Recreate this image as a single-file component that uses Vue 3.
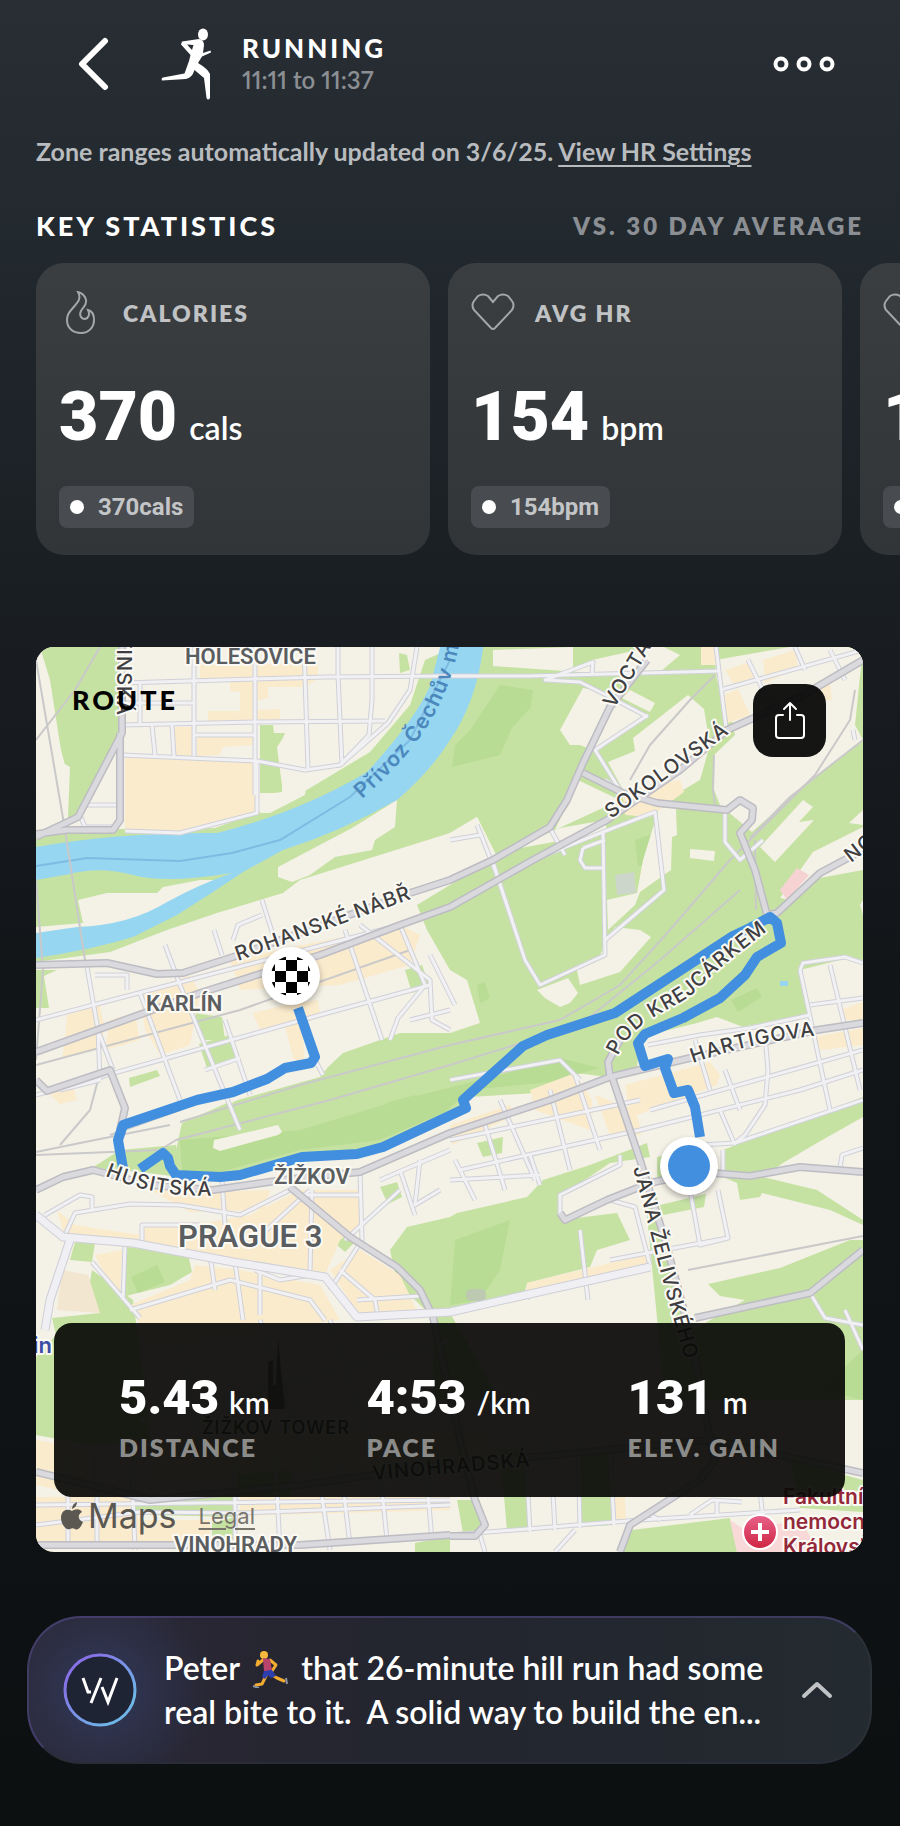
<script setup>
import { ref } from 'vue'

const stats = ref([
  { label: 'CALORIES', icon: 'flame', value: '370', unit: 'cals', average: '370cals' },
  { label: 'AVG HR', icon: 'heart', value: '154', unit: 'bpm', average: '154bpm' },
  { label: 'MAX HR', icon: 'heart', value: '178', unit: 'bpm', average: '178bpm' },
])

const summary = ref([
  { label: 'DISTANCE', value: '5.43', unit: 'km' },
  { label: 'PACE', value: '4:53', unit: '/km' },
  { label: 'ELEV. GAIN', value: '131', unit: 'm' },
])

// map shapes, all in the same space as the svg viewBox
const parks = [
  '40,647 122,647 122,733 78,817 68,817 70,767 63,763 50,680',
  '36,835 120,829 215,828 290,800 370,752 410,705 425,660 470,640 490,640 478,700 430,780 350,840 240,880 200,880 163,887 157,893 125,893 107,893 78,900 83,923 36,927',
  '260,725 273,725 274,733 285,733 283,738 277,747 283,793 260,793',
  '399,653 407,655 410,670 400,673',
  '478,647 863,647 863,960 848,958 800,970 810,1013 743,1027 717,1017 697,1023 640,1037 637,1068 607,1077 577,1073 550,1092 470,1097 450,1120 367,1155 300,1157 233,1178 180,1177 176,1150 182,1123 227,1103 320,1077 328,1067 343,1053 400,1033 450,1033 480,1023 467,980 450,970 427,930 417,905 450,885 497,857 477,817 450,833 300,880 283,893 217,913 167,930 110,952 36,962 36,955 110,940 180,912 233,878 350,830 430,775 465,710',
  '92,1168 120,1150 176,1145 180,1177 140,1172',
  '194,1013 222,1017 225,1040 202,1040',
  '199,1044 230,1035 235,1058 207,1068',
  '129,1078 157,1070 160,1076 130,1087',
  '405,970 422,965 430,987 412,993',
  '36,970 57,970 44,976 49,1008 36,1008',
  '450,1217 457,1213 527,1197 543,1180 590,1165 647,1143 650,1157 610,1163 560,1197 560,1220 617,1213 630,1240 597,1250 590,1267 527,1283 523,1300 450,1313 500,1400 433,1400 433,1317 397,1283 390,1250 407,1227',
  '723,1150 783,1127 863,1097 863,1117 817,1143 783,1163 763,1177 817,1190 863,1220 863,1225 830,1210 762,1193 760,1197 740,1200 737,1183 723,1177',
  '477,1143 503,1137 502,1153 483,1157',
  '657,1157 690,1150 690,1180 657,1180',
  '660,1205 706,1194 704,1207 663,1215',
  '645,1195 657,1197 687,1330 800,1300 863,1270 863,1400 665,1400',
  '708,1284 780,1268 850,1240 863,1240 863,1290 790,1320 700,1326 745,1300 720,1296',
  '36,1357 56,1335 52,1318 100,1313 88,1293 92,1270 133,1300 145,1390 150,1440 90,1445 36,1435',
  '75,1242 95,1243 92,1262 70,1260',
  '127,1247 188,1254 192,1272 170,1285 122,1297',
  '380,1187 397,1182 402,1197 388,1204',
  '331,1240 342,1230 354,1243 345,1252',
  '230,1450 295,1445 290,1497 235,1497',
  '135,1497 235,1497 235,1517 150,1515 135,1510',
  '212,1523 235,1517 235,1540 212,1537',
  '457,1500 480,1500 483,1533 463,1533',
  '500,1450 525,1450 530,1530 507,1531',
  '580,1450 610,1450 613,1525 582,1527',
  '632,1530 730,1518 737,1552 620,1552',
  '415,1543 450,1536 450,1552 415,1552',
  '790,1460 863,1480 863,1512 800,1508',
]
const deepParks = [
  '470,730 500,685 533,690 531,707 512,728 500,755 452,767 455,745',
  '300,1130 400,1100 500,1075 560,1058 600,1068 550,1082 470,1090 445,1112 380,1140 300,1150 220,1172 182,1172 180,1140',
  '635,840 658,832 661,862 638,866',
  '386,1103 415,1095 420,1108 388,1120',
  '731,1000 757,988 762,997 738,1012',
  '131,1277 157,1265 165,1282 138,1293',
  '477,985 485,982 490,998 480,1003',
  '455,1240 510,1220 500,1270 480,1300 450,1305',
  '863,1350 820,1390 863,1400',
]
const land = [
  '36,650 42,665 48,700 65,765 68,817 60,825 36,815',
  '375,685 398,689 390,705 388,716 374,716',
  '283,770 308,770 305,795 270,813 260,813 260,795 282,792',
  '278,867 352,828 397,800 395,827 375,840 372,850 335,857 310,875 292,882 278,877',
  '493,650 573,647 573,668 592,662 592,673 493,666',
  '592,660 660,645 680,655 660,672 592,673',
  '583,688 606,692 642,716 597,752 580,745 570,745 560,730',
  '630,690 655,703 650,712 622,698',
  '633,738 688,695 704,709 710,745 700,780 680,792 640,800 623,790 608,762 635,751',
  '578,780 605,793 620,800 555,830',
  '560,828 605,820 607,832 510,850',
  '450,833 477,817 497,857 450,875',
  '714,755 735,735 733,724 717,680 715,660 790,647 863,647 855,725 863,740 800,790 752,832 720,805 714,790',
  '690,849 715,851 714,861 690,858',
  '659,808 676,808 677,835 672,837 671,870 640,892 635,905 608,930 607,900 637,893 643,860',
  '615,927 640,930 651,937 620,972 580,985 577,970 600,955',
  '537,990 568,978 578,993 570,1003 560,1007 545,998',
  '760,847 803,800 813,807 799,822 814,820 775,862',
  '780,898 813,852 863,827 863,870 820,878 790,900',
  '860,905 863,900 863,915',
  '849,823 863,810 863,825',
  '214,1140 278,1125 282,1132 278,1135 220,1151 213,1148',
  '225,1097 265,1085 230,1104',
]
const built = [
  '200,664 318,664 318,678 305,687 268,687 268,698 253,702 253,710 280,709 280,721 208,721 208,711 240,711 240,692 230,691 230,680 200,680',
  '125,758 257,758 257,813 180,832 125,830',
  '175,727 193,727 193,756 175,756',
  '197,737 255,737 255,745 223,747 220,755 197,756',
  '701,647 716,647 716,665 701,665',
  '725,670 750,662 758,675 735,686',
  '763,660 795,650 798,668 765,683',
  '724,695 738,689 750,715 728,723',
  '622,790 680,780 684,792 650,817 625,815',
  '820,683 830,683 832,700 815,700',
  '67,1015 100,1005 105,1030 97,1050 62,1058 65,1040',
  '140,995 190,975 200,993 190,1045 160,1055 145,1030',
  '230,960 400,925 420,935 410,965 340,985 240,990',
  '253,1013 285,1005 318,1000 320,1015 302,1025 305,1065 293,1058 285,1025 260,1030',
  '50,1095 73,1085 77,1100 60,1104',
  '110,1020 135,1013 140,1040 105,1050',
  '57,1210 75,1225 140,1235 135,1245 65,1238',
  '140,1225 210,1222 250,1215 300,1190 360,1190 360,1225 340,1240 325,1275 235,1260 140,1243',
  '150,1190 210,1192 270,1190 265,1210 190,1212',
  '95,1255 122,1250 120,1293 105,1275',
  '195,1265 240,1270 320,1285 340,1320 150,1345 130,1305 190,1280',
  '330,1270 360,1250 400,1275 420,1317 360,1317',
  '450,1125 510,1105 515,1115 452,1145',
  '530,1090 575,1073 592,1100 590,1130 535,1110',
  '595,1095 635,1110 640,1135 610,1135',
  '625,1085 710,1062 720,1075 717,1085 637,1115 642,1135 632,1130',
  '815,1037 863,1028 863,1045 820,1050',
  '840,1010 863,1002 863,1020 845,1020',
  '527,1283 648,1254 650,1264 527,1293',
  '36,1440 90,1450 90,1497 36,1485',
  '36,1497 450,1497 450,1510 240,1516 240,1497 135,1497 135,1513 140,1520 210,1520 210,1545 36,1545',
  '613,1497 625,1497 626,1520 614,1522',
  '150,1440 480,1430 500,1460 300,1470 150,1480',
]
const minorRoads = [
  'M122,683 325,677 450,676 530,676 720,671',
  'M122,725 255,722 385,721',
  'M194,647V756M255,647V795M304,647 308,768M338,647V675L342,765M372,647V700L369,735 340,765',
  'M122,755 257,761 305,770 340,765 388,723 410,690 417,647',
  'M152,725 155,755M172,725 174,756M140,683V723M195,703H122M195,735H255',
  'M257,761V813L180,833 125,831M82,805 120,805M80,815 85,827 115,827',
  'M262,900 273,935M233,940 238,925 262,915M214,930 222,955M165,945 180,985 240,1130',
  'M477,825 495,870 525,960M450,840 480,835M493,862 525,960 540,985 605,955 603,832 533,860',
  'M603,832 655,812 664,890 605,940M583,848 580,860 585,868 605,868M583,848 605,840',
  'M648,715 595,750 620,790 605,780M592,673 593,662 545,680 580,682 610,697 648,717',
  'M716,647 727,735M720,690 863,650M748,660 758,680 770,705M795,647 805,670M830,650 845,680',
  'M551,830 565,855M725,811 725,842 740,860 763,840M853,730 855,740',
  'M36,1020 150,990 400,925M36,1095 320,1015 430,985M60,1090 100,1080',
  'M87,967 98,1030 113,1070M98,1030 100,1080M95,975 127,975 127,990',
  'M140,993 180,1100M225,1020 250,1095M315,1060 323,1075M345,930 382,1040M360,925 430,980 432,1020 450,1030',
  'M400,925 425,985 398,1018 390,1040M410,1020 450,1010M430,955 455,1005M205,1070 240,1058',
  'M45,1215 80,1195 92,1197V1210M65,1235 75,1213 130,1204 180,1205 240,1215 290,1190M142,1243V1225L200,1225',
  'M250,1245 310,1190M312,1190 310,1270M360,1172 362,1240 330,1290M362,1195H300M222,1180 225,1225',
  'M125,1245 123,1300M210,1255 215,1290M235,1262 243,1320M260,1270 260,1315M92,1262 140,1318',
  'M130,1310 230,1280 310,1300 325,1320M255,1270 280,1280 310,1275M340,1270 375,1300 378,1317M357,1300 420,1296',
  'M380,1180 450,1150M400,1170 415,1215M420,1160 415,1205 440,1190M345,1240 400,1190',
  'M500,1100 535,1180M550,1090 570,1170M575,1075 600,1150M450,1140 640,1100M460,1170 640,1130 800,1090 863,1070',
  'M450,1080 560,1060 580,1080M455,1160 475,1200M485,1125 505,1190M450,1180 540,1175M530,1155 540,1185',
  'M648,1045 700,1035 750,1028 810,1015M695,1040 710,1090M725,1070 740,1110M765,1035 768,1070 765,1105 745,1135 735,1143',
  'M800,970 830,1110M830,965 860,1090M810,1005 863,998M650,1110 863,1050M700,1145 735,1143 863,1100M723,1150V1172',
  'M800,970 803,963 845,957 863,963M720,1110 735,1145M560,1215 560,1195 620,1165 620,1155M610,1200 635,1207 650,1265',
  'M690,1190 700,1245 728,1238 718,1190M588,1300 580,1230M527,1293V1300M610,1260 728,1238M840,1167 842,1155 863,1148',
  'M810,1293 825,1318 863,1325M863,1350 845,1310',
  'M68,1450 68,1545M97,1450 97,1545M135,1450 133,1497 135,1550M235,1450 235,1550M36,1505 450,1500M36,1525 140,1512 240,1513 450,1505',
  'M275,1450 280,1552M315,1450 330,1550M340,1460 350,1545M380,1470 387,1540M425,1460 432,1540',
  'M525,1440 530,1532M550,1440 555,1530M578,1440 580,1528M610,1450 614,1525M450,1535 640,1520 800,1510M575,1530 555,1552M480,1535 485,1552',
  'M690,1515 712,1500 742,1502M717,1500V1515M760,1490 763,1520M660,1520 650,1515M140,1420 300,1380 450,1340M260,1320 300,1440M330,1320 370,1440M180,1340 200,1450',
]
const majorRoads = [
  'M36,837 78,817 122,733V647M36,834 67,830 113,830 120,820V733',
  'M36,965 107,963 157,974 183,973 233,957 410,893 450,880 493,860 550,827 567,800 583,763 610,707 647,660',
  'M36,1052 97,1030 200,993 320,955 400,925 450,907 533,860 607,820 680,770 727,730 800,697 863,660',
  'M36,1190 63,1177 93,1170 150,1185 213,1190 283,1180 360,1172 450,1133 550,1100 610,1077 690,1058 817,1030 863,1023',
  'M612,1077 640,1160 665,1240 692,1340 710,1440 715,1460 700,1480 630,1525 620,1552',
  'M290,1187 350,1237 397,1267 420,1290 433,1317 460,1440 475,1500 485,1525 475,1536 450,1536',
  'M583,773 623,793 657,803 727,810 740,800 753,808 752,820 740,833 755,870 767,915 777,913 820,873 863,850',
  'M560,1213 565,1220 607,1200 650,1183 700,1172 750,1176 800,1167 863,1172',
  'M610,1077 608,1062 620,1040',
  'M695,1318 810,1293 863,1250',
  'M36,1080 47,1091 110,1070 125,1108 120,1130',
  'M36,1472 150,1500 300,1485 450,1465 710,1440 863,1473M36,1545 300,1545 450,1535',
]
const wideRoads = [
  'M36,1215 63,1237 133,1243 233,1262 325,1277 357,1317 450,1312 650,1267',
  'M70,1240 50,1300 45,1330',
]
const rails = [
  'M100,647 75,690 36,740M36,660 65,830 85,960M36,1065 240,1010 410,950',
  'M36,1152 85,1142 170,1125M36,1155 160,1150 176,1140 330,1100 450,1065 580,1025 660,960 740,890',
  'M98,1080 90,1110 60,1145M180,1122 300,1085 450,1045 560,1020 620,985 670,930 730,860 815,775 850,720 855,690',
  'M630,780 650,745 690,700 715,675M714,755 713,790 715,805M688,1270 863,1236M110,1135 180,1110',
  'M36,880 43,970 36,1060M755,840 756,910M750,838 790,797 863,740',
]

const routeLine =
  'M298,1008 315,1057 311,1063 285,1068 267,1079 233,1092 197,1100 123,1125 118,1140 123,1168M140,1169 163,1153 168,1158 170,1166 176,1175 220,1177 240,1175 302,1157 357,1154 383,1147 466,1108 463,1100 523,1046 547,1035 615,1013 733,936 750,928 770,917 777,923 781,943 757,957 745,975 720,998 683,1018 645,1034 638,1043 645,1066 668,1059 665,1068 674,1093 688,1090 695,1107 700,1137'
</script>

<template>
  <main class="screen">
    <header class="topbar">
      <button class="icon-button" aria-label="Back">
        <svg width="32" height="54" viewBox="0 0 32 54">
          <path d="M27 4 4 27 27 50" fill="none" stroke="#fff" stroke-width="6" stroke-linecap="round" stroke-linejoin="round" />
        </svg>
      </button>
      <svg class="runner" width="52" height="72" viewBox="160 28 52 72" fill="#fff">
        <ellipse cx="203" cy="34.500" rx="5" ry="6" />
        <path
          fill-rule="evenodd"
          d="M182 41.500 199 39Q204 40 204 45L203 53 210.500 50.500 211 52.500 202 56.500 198 63 Q208 69 210 74L210 98Q208 101 206.500 98L204 78 194.500 70 Q192 78 186 79L162 80.500Q161 78 163 77.500L184.500 73.500 189 61 190.500 55 181 44.500ZM187 44.500 192 50 193.500 45Z"
        />
      </svg>
      <div class="heading">
        <h1>RUNNING</h1>
        <p>11:11 to 11:37</p>
      </div>
      <button class="icon-button" aria-label="More">
        <svg width="62" height="16" viewBox="0 0 62 16" fill="none" stroke="#fff" stroke-width="4">
          <circle cx="8" cy="8" r="5.500" />
          <circle cx="31" cy="8" r="5.500" />
          <circle cx="54" cy="8" r="5.500" />
        </svg>
      </button>
    </header>

    <p class="notice">Zone ranges automatically updated on 3/6/25. <a href="#">View HR Settings</a></p>

    <div class="section-head">
      <h2>KEY STATISTICS</h2>
      <span>VS. 30 DAY AVERAGE</span>
    </div>

    <section class="cards">
      <article v-for="stat in stats" :key="stat.label" class="card">
        <div class="card-head">
          <svg class="card-icon" width="44" height="44" viewBox="0 0 44 44">
            <path
              v-if="stat.icon === 'flame'"
              d="M19 1C23 8 18 12 13 18C9 22 8 25 8 29C8 37 14 42 22 42C30 42 35 36 35 29C35 24 33 20 29 19C31 23 30 27 26 28C22 28 20 24 22 20C24 16 28 14 27 9C26 5 23 2 19 1Z"
            />
            <path v-else d="M22 11 17 5Q12 2 7 5L3 10Q0 14 3 19L20 37Q22 39 24 37L41 19Q44 14 41 10L37 5Q32 2 27 5Z" />
          </svg>
          <h3>{{ stat.label }}</h3>
        </div>
        <p class="value">
          <strong>{{ stat.value }}</strong> <span>{{ stat.unit }}</span>
        </p>
        <p class="badge"><i></i>{{ stat.average }}</p>
      </article>
    </section>

    <section class="route">
      <svg class="map" viewBox="36 647 827 905">
        <defs>
          <pattern id="checks" x="286" y="971" width="22" height="22" patternUnits="userSpaceOnUse">
            <rect width="22" height="22" fill="#fff" />
            <path d="M11 0h11v11h-11zM0 11h11v11h-11z" fill="#000" />
          </pattern>
          <linearGradient id="hospital" x1="0" y1="0" x2="0" y2="1">
            <stop offset="0" stop-color="#e8618c" />
            <stop offset="1" stop-color="#cf2540" />
          </linearGradient>
          <path id="river-name" d="M362,799C405,760 452,715 463,620" />
          <path id="rohanske" d="M238,961Q330,928 420,896" />
          <path id="krejcarkem" d="M618,1056C635,1015 680,1010 700,987 722,965 745,948 775,925" />
          <path id="husitska" d="M105,1176C140,1190 170,1198 225,1195" />
          <path id="hartigova" d="M693,1063C730,1050 770,1040 830,1034" />
          <path id="zelivskeho" d="M633,1168C645,1210 652,1240 660,1270 668,1300 677,1330 692,1385" />
        </defs>
        <rect x="36" y="647" width="827" height="905" fill="#f4f1e6" />
        <polygon v-for="p in parks" :key="p" :points="p" fill="#c6e2a3" />
        <polygon v-for="p in deepParks" :key="p" :points="p" fill="#b8dc93" />
        <polygon v-for="p in land" :key="p" :points="p" fill="#f4f1e6" />
        <polygon v-for="p in built" :key="p" :points="p" fill="#fbebcd" />
        <polygon points="615,875 634,872 636,893 617,895" fill="#ccd6ca" />
        <polygon points="780,890 797,868 809,875 787,900" fill="#f7d2d3" />
        <polygon points="730,1520 745,1530 800,1520 820,1552 737,1552" fill="#f9d8d8" />
        <polygon points="62,1270 88,1275 100,1313 57,1310" fill="#f3e6d0" />
        <path
          d="M36,847Q120,832 217,833 300,812 367,772 415,720 430,686L442,640H484Q478,700 450,740 430,772 397,800 340,832 283,850L243,872 213,892 177,915 133,937Q90,950 36,958V933L77,927Q130,925 167,902 200,884 232,873 165,884 133,875 100,866 70,874L36,880Z"
          fill="#97d6f1"
        />
        <path d="M36,866 87,858 180,861 232,853 280,840 350,797 410,740 450,660" fill="none" stroke="#7dbbe2" stroke-width="2" />
        <rect x="780" y="981" width="8" height="5" fill="#97d6f1" />
        <rect x="150" y="1500" width="9" height="4" fill="#97d6f1" />
        <rect x="466" y="1289" width="20" height="12" rx="5" fill="#bdc9b0" />

        <g fill="none" stroke-linejoin="round">
          <path v-for="r in rails" :key="r" :d="r" stroke="#c9c9c9" stroke-width="2" />
          <path v-for="r in minorRoads" :key="r" :d="r" stroke="#d0d1d8" stroke-width="5" />
          <path v-for="r in minorRoads" :key="r" :d="r" stroke="#f1f1f4" stroke-width="3" />
          <path v-for="r in majorRoads" :key="r" :d="r" stroke="#bcbcc2" stroke-width="8" />
          <path v-for="r in majorRoads" :key="r" :d="r" stroke="#d9d9de" stroke-width="5" />
          <path v-for="r in wideRoads" :key="r" :d="r" stroke="#cfcfd8" stroke-width="9" />
          <path v-for="r in wideRoads" :key="r" :d="r" stroke="#efeff4" stroke-width="7" />
          <path :d="routeLine" stroke="#418fde" stroke-width="10" />
        </g>

        <g class="street">
          <text><textPath href="#rohanske">ROHANSKÉ NÁBŘ</textPath></text>
          <text><textPath href="#krejcarkem">POD KREJCÁRKEM</textPath></text>
          <text><textPath href="#husitska">HUSITSKÁ</textPath></text>
          <text><textPath href="#hartigova">HARTIGOVA</textPath></text>
          <text><textPath href="#zelivskeho">JANA ŽELIVSKÉHO</textPath></text>
          <text transform="translate(611 819) rotate(-36)">SOKOLOVSKÁ</text>
          <text transform="translate(614 709) rotate(-59)">VOCTÁŘOVA</text>
          <text transform="translate(851 863) rotate(-38)">NOVÁ</text>
          <text transform="translate(117 716) rotate(90)" text-anchor="end">ARGENTINSKÁ</text>
          <text transform="translate(373 1480) rotate(-5)">VINOHRADSKÁ</text>
          <text class="landmark" x="202" y="1434">ŽIŽKOV TOWER</text>
        </g>
        <path d="M278 1337 281 1370 285 1409H268V1362L273 1360V1385H276Z" fill="#777" />
        <text class="river"><textPath href="#river-name">Přívoz Čechův most</textPath></text>
        <g class="district">
          <text x="185" y="664">HOLEŠOVICE</text>
          <text x="146" y="1011">KARLÍN</text>
          <text x="274" y="1184">ŽIŽKOV</text>
          <text x="174" y="1552">VINOHRADY</text>
          <text class="city" x="178" y="1247">PRAGUE 3</text>
        </g>
        <text class="station" x="52" y="1353" text-anchor="end">in</text>
        <g class="hospital">
          <text x="783" y="1504">Fakultní</text>
          <text x="783" y="1529">nemocnice</text>
          <text x="783" y="1554">Královské</text>
          <circle cx="760" cy="1532" r="17" fill="url(#hospital)" stroke="#fff" stroke-width="2" />
          <path d="M760 1523v18M751 1532h18" stroke="#fff" stroke-width="4" />
        </g>

        <g class="pin">
          <circle cx="291" cy="976" r="29" fill="#fff" />
          <circle cx="291" cy="976" r="20" fill="url(#checks)" />
        </g>
        <g class="pin">
          <circle cx="689" cy="1166" r="29" fill="#fff" />
          <circle cx="689" cy="1166" r="21" fill="#418fde" />
        </g>
      </svg>

      <div class="route-head">
        <h2>ROUTE</h2>
        <button class="share" aria-label="Share route">
          <svg width="32" height="40" viewBox="0 0 32 40" fill="none" stroke="#fff" stroke-width="2" stroke-linecap="round" stroke-linejoin="round">
            <path d="M9 14H5Q2 14 2 17V34Q2 37 5 37H27Q30 37 30 34V17Q30 14 27 14H23" />
            <path d="M16 19V2M10 8 16 2 22 8" />
          </svg>
        </button>
      </div>

      <dl class="summary">
        <div v-for="item in summary" :key="item.label">
          <dd>
            <strong>{{ item.value }}</strong> <span>{{ item.unit }}</span>
          </dd>
          <dt>{{ item.label }}</dt>
        </div>
      </dl>

      <div class="attribution">
        <span class="brand">
          <svg width="23" height="28" viewBox="0 0 23 28" fill="#5b5852">
            <path d="M16 0Q16 5 11 7 11 2 16 0Z" />
            <path d="M11 9C14 7 19 6 21 10C16 13 17 18 22 20C20 25 17 29 14 27C12 26 11 26 9 27C5 29 0 22 0 16C0 8 6 6 11 9Z" />
          </svg>
          Maps
        </span>
        <a href="#">Legal</a>
      </div>
    </section>

    <button class="insight">
      <svg class="coach" width="74" height="74" viewBox="0 0 74 74" fill="none">
        <defs>
          <linearGradient id="ring" x1="0" y1="0" x2="1" y2="1">
            <stop offset="0.2" stop-color="#8672e6" />
            <stop offset="0.8" stop-color="#6fb5e8" />
          </linearGradient>
        </defs>
        <circle cx="37" cy="37" r="35" fill="#1f2435" stroke="url(#ring)" stroke-width="3" />
        <path d="M20 25 25 39H28M38 25 28 50M39 34 45 49 54 25" stroke="#fff" stroke-width="3" />
      </svg>
      <span class="message">
        Peter
        <svg width="36" height="38" viewBox="0 0 36 38">
          <circle cx="12" cy="5" r="4" fill="#f6b93b" />
          <path d="M11 10 5 15 6 11M18 10 24 15 20 21M20 25 25 28 32 31M14 26 10 34 4 35" fill="none" stroke="#f2ac30" stroke-width="3" stroke-linecap="round" stroke-linejoin="round" />
          <path d="M11 8 18 9 20 20 12 22Z" fill="#b8436b" />
          <path d="M12 21 20 20 24 26 19 28 16 25 13 29 10 27Z" fill="#2b3fae" />
          <path d="M1 36 7 38M34 28 35 34" stroke="#8b93a6" stroke-width="2" />
        </svg>
        that 26-minute hill run had some<br />real bite to it.&nbsp; A solid way to build the en...
      </span>
      <svg class="chevron" width="32" height="18" viewBox="0 0 32 18">
        <path d="M3 15 16 3 29 15" fill="none" stroke="#c0c3c6" stroke-width="4" stroke-linecap="round" stroke-linejoin="round" />
      </svg>
    </button>
  </main>
</template>

<style>
body {
  margin: 0;
  background: #0e1113;
}
</style>

<style scoped>
.screen {
  box-sizing: border-box;
  min-height: 100vh;
  padding: 28px 0 63px;
  overflow: hidden;
  background: linear-gradient(#282e34 0, #21282e 250px, #191d21 640px, #111518 1000px, #0d1011 1826px);
  color: #fff;
  font-family: Lato, 'Open Sans', sans-serif;
}
h1,
h2,
h3,
p,
dl,
dd {
  margin: 0;
}
button {
  padding: 0;
  border: 0;
  background: none;
  color: inherit;
  font: inherit;
  cursor: pointer;
}
svg {
  display: block;
}
.topbar {
  display: flex;
  align-items: center;
  padding: 0 65px 0 78px;
}
.runner {
  margin-left: 50px;
}
.heading {
  flex: 1;
  margin-left: 30px;
}
h1,
h2 {
  font-size: 26px;
  line-height: 32px;
  font-weight: 900;
  letter-spacing: 3px;
}
h2 {
  font-size: 27px;
}
.heading p {
  color: #8b8f93;
  font-size: 24px;
  line-height: 32px;
  font-weight: 600;
  font-variant-numeric: proportional-nums;
}
.notice {
  margin: 35px 36px 0;
  color: #b9bcbf;
  font-size: 25px;
  line-height: 32px;
  font-weight: 700;
}
.notice a {
  color: inherit;
  text-decoration-thickness: 2px;
  text-underline-offset: 4px;
}
.section-head {
  display: flex;
  justify-content: space-between;
  margin: 43px 36px 0;
}
.section-head span {
  color: #8b8f93;
  font-size: 24px;
  line-height: 32px;
  font-weight: 800;
  letter-spacing: 3px;
}
.cards {
  display: flex;
  gap: 18px;
  margin-top: 21px;
  padding-left: 36px;
  overflow: hidden;
}
.card {
  box-sizing: border-box;
  flex: 0 0 calc(50% - 38px);
  padding: 28px 23px 27px;
  border-radius: 28px;
  background: linear-gradient(#3a3e41, #313538);
}
.card-head {
  display: flex;
  align-items: center;
  gap: 20px;
}
.card-icon {
  fill: none;
  stroke: #a4a7aa;
  stroke-width: 2;
}
h3 {
  color: #c0c2c4;
  font-size: 23px;
  line-height: 32px;
  font-weight: 800;
  letter-spacing: 2px;
}
.value {
  display: flex;
  align-items: baseline;
  gap: 12px;
  margin-top: 42px;
  font-size: 32px;
  line-height: 80px;
  font-weight: 600;
}
.value strong {
  font-family: Roboto, sans-serif;
  font-size: 68px;
}
.badge {
  display: flex;
  align-items: center;
  gap: 14px;
  width: fit-content;
  margin-top: 18px;
  padding: 0 11px;
  border-radius: 8px;
  background: #484b4f;
  color: #c3c5c7;
  font-family: Roboto, sans-serif;
  font-size: 24px;
  line-height: 42px;
  font-weight: 700;
}
.badge i {
  width: 14px;
  height: 14px;
  border-radius: 50%;
  background: #fff;
}
.route {
  position: relative;
  margin: 92px 37px 0 36px;
  border-radius: 18px;
  overflow: hidden;
}
.map {
  width: 100%;
  height: auto;
}
.map text {
  paint-order: stroke;
  stroke: #fbfaf5;
  stroke-width: 4px;
  stroke-linejoin: round;
}
.street {
  fill: #3f3f42;
  font: 500 20px Inter, sans-serif;
  letter-spacing: 1px;
}
.landmark {
  font-size: 18px;
}
.map .river {
  fill: #4b88bd;
  stroke: none;
  font: 600 21px Inter, sans-serif;
  letter-spacing: 1px;
}
.district {
  fill: #5b5e61;
  font: 600 22px Roboto, sans-serif;
}
.city {
  font-size: 31px;
}
.station {
  fill: #3c4fa5;
  font: 600 22px Inter, sans-serif;
}
.hospital {
  fill: #93283a;
  font: 600 21px Inter, sans-serif;
}
.pin {
  filter: drop-shadow(0 3px 3px rgba(0, 0, 0, 0.3));
}
.route-head {
  position: absolute;
  top: 37px;
  left: 36px;
  right: 37px;
  display: flex;
  justify-content: space-between;
  color: #000;
}
.share {
  display: grid;
  place-items: center;
  width: 73px;
  height: 73px;
  border-radius: 20px;
  background: rgba(8, 8, 8, 0.95);
}
.summary {
  position: absolute;
  left: 18px;
  right: 18px;
  bottom: 55px;
  display: flex;
  justify-content: space-between;
  padding: 44px 65px 36px;
  border-radius: 18px;
  background: rgba(10, 10, 8, 0.93);
}
.summary dd {
  display: flex;
  align-items: baseline;
  gap: 10px;
  font-size: 30px;
  line-height: 62px;
  font-weight: 600;
}
.summary strong {
  font-family: Roboto, sans-serif;
  font-size: 49px;
}
.summary dt {
  color: #8b8b8a;
  font-size: 25px;
  line-height: 28px;
  font-weight: 800;
  letter-spacing: 2px;
}
.attribution {
  position: absolute;
  left: 25px;
  bottom: 15px;
  display: flex;
  align-items: center;
  gap: 22px;
  color: #5b5852;
  font-family: Inter, sans-serif;
}
.brand {
  display: flex;
  align-items: center;
  gap: 4px;
  font-size: 34px;
  line-height: 42px;
}
.attribution a {
  color: #77746c;
  font-size: 22px;
  text-decoration-thickness: 2px;
  text-underline-offset: 4px;
}
.insight {
  box-sizing: border-box;
  display: flex;
  align-items: center;
  width: calc(100% - 55px);
  margin: 64px 28px 0 27px;
  padding: 28px 37px 28px 34px;
  border: 2px solid rgba(115, 95, 190, 0.35);
  border-right-color: #2a3238;
  border-bottom-color: #2a2c38;
  border-radius: 54px;
  background:
    radial-gradient(circle at 72px 72px, #2f3450 30px, rgba(47, 52, 80, 0) 110px),
    linear-gradient(90deg, #2b2735, #23252f 45%, #232a30);
  text-align: left;
}
.coach {
  flex: none;
}
.message {
  flex: 1;
  margin-left: 27px;
  font-size: 32px;
  line-height: 44px;
  font-weight: 600;
  white-space: nowrap;
}
.message svg {
  display: inline-block;
  margin: 0 5px;
  vertical-align: -8px;
}
.chevron {
  flex: none;
}
</style>
